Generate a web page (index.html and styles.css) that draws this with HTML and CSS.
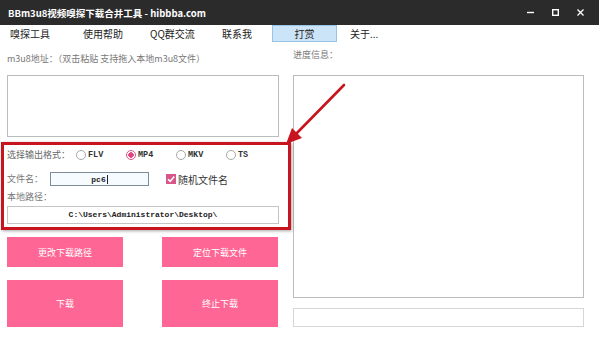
FILE: index.html
```html
<!DOCTYPE html>
<html lang="zh-CN">
<head>
    <meta charset="UTF-8">
    <meta name="viewport" content="width=device-width, initial-scale=1.0">
    <title>BBm3u8视频嗅探下载合并工具</title>
    <link rel="stylesheet" href="styles.css">
</head>
<body>
    <div class="window">
        <div class="titlebar">
            <span class="title">BBm3u8视频嗅探下载合并工具 - hibbba.com</span>
            <div class="controls">
                <svg width="7" height="7" viewBox="0 0 7 7"><path d="M0 3.5H7" stroke="#fff" stroke-width="1.4"/></svg>
                <svg width="7" height="7" viewBox="0 0 7 7"><rect x="0.7" y="0.7" width="5.6" height="5.6" fill="none" stroke="#fff" stroke-width="1.4"/></svg>
                <svg width="7" height="7" viewBox="0 0 7 7"><path d="M0.5 0.5L6.5 6.5M6.5 0.5L0.5 6.5" stroke="#fff" stroke-width="1.3"/></svg>
            </div>
        </div>

        <div class="menubar">
            <span class="menu-item w1">嗅探工具</span>
            <span class="menu-item w2">使用帮助</span>
            <span class="menu-item w3">QQ群交流</span>
            <span class="menu-item w4">联系我</span>
            <span class="menu-item active">打赏</span>
            <span class="menu-item last">关于...</span>
        </div>

        <div class="main">
            <div class="left">
                <div class="label url-label">m3u8地址：（双击粘贴 支持拖入本地m3u8文件）</div>
                <div class="textbox url-box"></div>

                <div class="row format-row">
                    <span class="label format-label">选择输出格式：</span>
                    <span class="radio"><i class="dot"></i>FLV</span>
                    <span class="radio"><i class="dot checked"></i>MP4</span>
                    <span class="radio"><i class="dot"></i>MKV</span>
                    <span class="radio"><i class="dot"></i>TS</span>
                </div>

                <div class="row name-row">
                    <span class="label name-label">文件名：</span>
                    <span class="name-input">pc6<i class="caret"></i></span>
                    <span class="check">
                        <svg width="10" height="10" viewBox="0 0 10 10"><rect width="10" height="10" fill="#d8578a"/><path d="M2 5.2L4.2 7.4L8.2 2.6" fill="none" stroke="#fff" stroke-width="1.6"/></svg>
                    </span>
                    <span class="check-text">随机文件名</span>
                </div>

                <div class="label path-label">本地路径：</div>
                <div class="path-box">C:\Users\Administrator\Desktop\</div>

                <div class="buttons">
                    <div class="btn">更改下载路径</div>
                    <div class="btn">定位下载文件</div>
                    <div class="btn tall">下载</div>
                    <div class="btn tall">终止下载</div>
                </div>
            </div>

            <div class="right">
                <div class="label info-label">进度信息：</div>
                <div class="textbox info-box"></div>
                <div class="progress"></div>
            </div>
        </div>

        <!-- red annotation over the options -->
        <div class="mark"></div>
        <svg class="arrow" width="599" height="339" viewBox="0 0 599 339">
            <path d="M344 85L293 137" stroke="#c8141e" stroke-width="2.6" stroke-linecap="round"/>
            <path d="M286 144L292 128L302 138Z" fill="#c8141e"/>
        </svg>
    </div>
</body>
</html>
```

FILE: styles.css
```css
body {
    margin: 0;
    font-family: "Noto Sans CJK SC", "Noto Sans", sans-serif;
    background: #fff;
}

.window {
    position: relative;
    width: 599px;
    height: 339px;
    overflow: hidden;
    background: #fff;
}

.titlebar {
    display: flex;
    align-items: center;
    height: 25px;
    padding-left: 8px;
    background: #2b2b2b;
    color: #fff;
}

.title {
    font-size: 9.5px;
    font-weight: bold;
}

.controls {
    display: flex;
    gap: 18px;
    margin-left: auto;
    margin-right: 15px;
}

.controls svg {
    display: block;
}

.menubar {
    display: flex;
    align-items: center;
    height: 17px;
    padding-left: 10px;
    font-size: 10px;
    color: #222;
}

.menu-item {
    line-height: 15px;
}

.w1 { width: 73px; }
.w2 { width: 67px; }
.w3 { width: 72px; }
.w4 { width: 50px; }

.menu-item.active {
    width: 63px;
    height: 15px;
    text-align: center;
    background: #cce4f7;
    border: 1px solid #99c4e6;
}

.menu-item.last {
    margin-left: 13px;
}

.main {
    display: flex;
    gap: 14px;
    padding: 0 15px 0 7px;
}

.left {
    width: 272px;
}

.right {
    width: 291px;
}

.label {
    font-size: 9px;
    line-height: 12px;
    color: #777;
    white-space: nowrap;
}

.url-label {
    margin-top: 11px;
}

.textbox {
    box-sizing: border-box;
    border: 1px solid #bcbcbc;
    background: #fff;
}

.url-box {
    height: 62px;
    margin-top: 10px;
}

.row {
    display: flex;
    align-items: center;
    height: 14px;
}

.format-row {
    margin-top: 11px;
}

.format-label {
    width: 69px;
    color: #666;
}

.radio {
    display: flex;
    align-items: center;
    width: 50px;
    font-family: "Liberation Mono", monospace;
    font-weight: bold;
    font-size: 8.5px;
    color: #333;
}

.dot {
    box-sizing: border-box;
    width: 10px;
    height: 10px;
    margin-right: 2px;
    border: 1px solid #a8a8a8;
    border-radius: 50%;
    background: #fff;
}

.dot.checked {
    border-color: #d8578a;
    background: radial-gradient(circle, #e0457e 0 2.5px, #fff 3px);
}

.name-row {
    margin-top: 10px;
}

.name-label {
    width: 43px;
}

.name-input {
    box-sizing: border-box;
    display: flex;
    align-items: center;
    justify-content: center;
    width: 99px;
    height: 14px;
    border: 1px solid #7f8c98;
    background: #f6fbff;
    font-family: "Liberation Mono", monospace;
    font-weight: bold;
    font-size: 8px;
    color: #222;
}

.caret {
    width: 1px;
    height: 9px;
    margin-left: 1px;
    background: #222;
}

.check {
    display: flex;
    margin-left: 17px;
}

.check-text {
    margin-left: 2px;
    font-size: 10px;
    color: #333;
}

.path-label {
    margin-top: 5px;
}

.path-box {
    box-sizing: border-box;
    height: 18px;
    margin-top: 3px;
    border: 1px solid #c4c4c4;
    font-family: "Liberation Mono", monospace;
    font-weight: bold;
    font-size: 8px;
    line-height: 16px;
    text-align: center;
    color: #222;
}

.buttons {
    display: grid;
    grid-template-columns: 116px 116px;
    grid-template-rows: 30px 47px;
    column-gap: 39px;
    row-gap: 13px;
    margin-top: 13px;
}

.btn {
    display: flex;
    align-items: center;
    justify-content: center;
    background: #fe6795;
    color: #fff;
    font-size: 9px;
}

.info-label {
    margin-top: 7px;
}

.info-box {
    height: 223px;
    margin-top: 14px;
}

.progress {
    box-sizing: border-box;
    height: 19px;
    margin-top: 10px;
    border: 1px solid #d6d6d6;
}

.mark {
    position: absolute;
    left: 1px;
    top: 142px;
    width: 290px;
    height: 88px;
    box-sizing: border-box;
    border: 3px solid #c8141e;
    box-shadow: 1px 1px 3px rgba(0, 0, 0, 0.35);
}

.arrow {
    position: absolute;
    left: 0;
    top: 0;
    pointer-events: none;
}
```
